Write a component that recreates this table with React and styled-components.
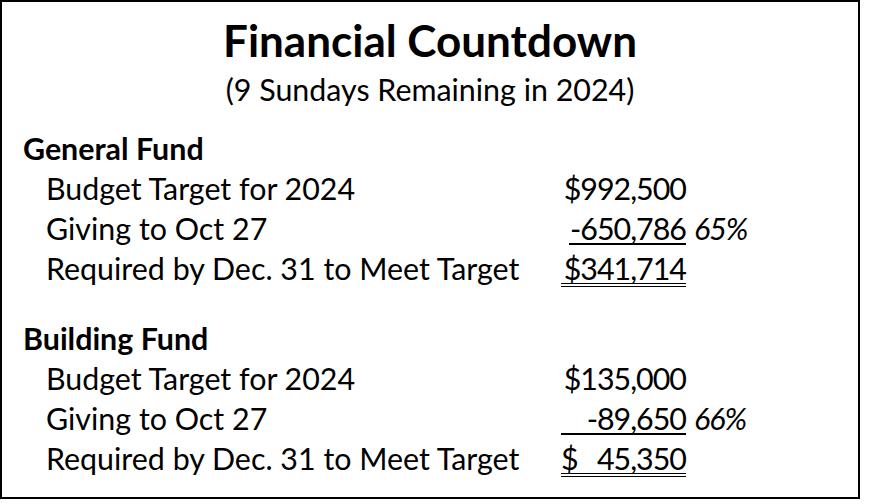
import React from "react";
import styled, { createGlobalStyle } from "styled-components";

const GlobalStyle = createGlobalStyle`
  body {
    margin: 0;
    background: #fff;
  }
`;

const Sheet = styled.section`
  box-sizing: border-box;
  width: 860px;
  height: 499px;
  padding-top: 12px;
  border: 2px solid #000;
  box-shadow: 0 2px 0 #8f8f8f;
  background: #fff;
  color: #000;
  font-family: Lato, "Liberation Sans", sans-serif;
`;

const Header = styled.header`
  display: flex;
  flex-direction: column;
  align-items: center;
`;

const Title = styled.h1`
  margin: 0;
  font-size: 44px;
  line-height: 52px;
  font-weight: 700;
`;

const Subtitle = styled.p`
  margin: 3px 0 0;
  font-size: 30.4px;
  line-height: 40px;
`;

const Fund = styled.div`
  margin-top: ${(p) => p.$gap}px;
  padding-left: 21px;
  font-size: 30.4px;
  line-height: 40px;
`;

const FundName = styled.h2`
  margin: 0;
  font-size: inherit;
  font-weight: 700;
`;

const Row = styled.div`
  display: grid;
  grid-template-columns: 507px 125px auto;
  column-gap: 8px;
  padding-left: 23px;
`;

const Label = styled.span`
  white-space: nowrap;
`;

const Amount = styled.span`
  position: relative;
  display: flex;
  justify-content: ${(p) => (p.$split ? "space-between" : "flex-end")};
  letter-spacing: -1px;
  white-space: pre;

  &::after {
    content: "";
    position: absolute;
    left: ${(p) => p.$lead || 0}px;
    right: 0;
    top: 35px;
    display: ${(p) => (p.$line ? "block" : "none")};
    height: ${(p) => (p.$line === "double" ? "4px" : "2px")};
    box-sizing: border-box;
    border-top: ${(p) => (p.$line === "double" ? "1px" : "2px")} solid #000;
    border-bottom: ${(p) => (p.$line === "double" ? "1px solid #000" : "none")};
  }
`;

const Percent = styled.span`
  font-style: italic;
  letter-spacing: -1px;
`;

const funds = [
  {
    name: "General Fund",
    gap: 19,
    target: "$992,500",
    giving: "-650,786",
    givingLead: 8,
    pct: "65%",
    required: ["$341,714"],
  },
  {
    name: "Building Fund",
    gap: 30,
    target: "$135,000",
    giving: "-89,650",
    givingLead: 0,
    pct: "66%",
    required: ["$", "45,350"],
  },
];

export default function App() {
  return (
    <>
      <GlobalStyle />
      <Sheet>
        <Header>
          <Title>Financial Countdown</Title>
          <Subtitle>(9 Sundays Remaining in 2024)</Subtitle>
        </Header>
        {funds.map((f) => (
          <Fund key={f.name} $gap={f.gap}>
            <FundName>{f.name}</FundName>
            <Row>
              <Label>Budget Target for 2024</Label>
              <Amount>{f.target}</Amount>
            </Row>
            <Row>
              <Label>Giving to Oct 27</Label>
              <Amount $line="single" $lead={f.givingLead}>
                {f.giving}
              </Amount>
              <Percent>{f.pct}</Percent>
            </Row>
            <Row>
              <Label>Required by Dec. 31 to Meet Target</Label>
              <Amount $split={f.required.length > 1} $line="double">
                {f.required.map((part) => (
                  <span key={part}>{part}</span>
                ))}
              </Amount>
            </Row>
          </Fund>
        ))}
      </Sheet>
    </>
  );
}
